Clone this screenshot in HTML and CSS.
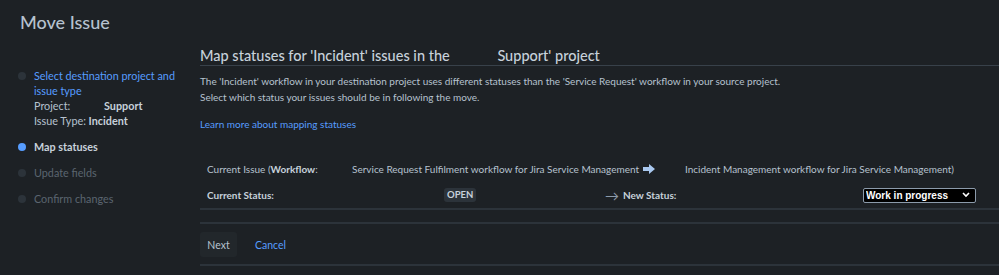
FILE: index.html
```html
<!DOCTYPE html>
<html lang="en">
<head>
  <meta charset="UTF-8" />
  <title>Move Issue</title>
  <link rel="stylesheet" href="styles.css">
</head>
<body>
  <header class="page-header">
    <h1>Move Issue</h1>
  </header>
  <div class="layout">
    <ul class="steps">
      <li class="step done">
        <span class="dot"></span>
        <div class="step-body">
          <a href="#" class="step-link">Select destination project and issue type</a>
          <div class="meta"><span class="meta-label">Project:</span><b>Support</b></div>
          <div class="meta">Issue Type: <b>Incident</b></div>
        </div>
      </li>
      <li class="step current"><span class="dot"></span><div class="step-body">Map statuses</div></li>
      <li class="step todo"><span class="dot"></span><div class="step-body">Update fields</div></li>
      <li class="step todo"><span class="dot"></span><div class="step-body">Confirm changes</div></li>
    </ul>

    <main class="content">
      <h2>Map statuses for 'Incident' issues in the <span class="avatar-gap"></span>Support' project</h2>
      <p class="desc">The 'Incident' workflow in your destination project uses different statuses than the 'Service Request' workflow in your source project.<br>
        Select which status your issues should be in following the move.</p>
      <div class="learn"><a href="#">Learn more about mapping statuses</a></div>

      <div class="mapping">
        <div class="row row-workflow">
          <div class="c1">Current Issue (<b>Workflow</b>:</div>
          <div class="c2">Service Request Fulfilment workflow for Jira Service Management<svg class="fat-arrow" width="12" height="10" viewBox="0 0 12 10"><path d="M0 3h6V0l6 5-6 5V7H0z" fill="#a9c8ef"/></svg></div>
          <div class="c3">Incident Management workflow for Jira Service Management)</div>
        </div>
        <div class="row row-status">
          <div class="s1"><b>Current Status:</b></div>
          <div class="s2"><span class="lozenge">OPEN</span></div>
          <div class="s3">&rarr;</div>
          <div class="s4"><b>New Status:</b></div>
          <div class="s5">
            <select class="status-select">
              <option>Work in progress</option>
            </select>
          </div>
        </div>
      </div>

      <div class="actions">
        <button class="btn">Next</button>
        <a href="#" class="cancel">Cancel</a>
      </div>
    </main>
  </div>
</body>
</html>
```

FILE: styles.css
```css
* { box-sizing: border-box; }
body {
  margin: 0;
  background: #1d2125;
  color: #b6c2cf;
  font-family: Lato, "Noto Sans", sans-serif;
  font-size: 10px;
}
a { color: #579dff; text-decoration: none; }
b { font-weight: 700; color: #c7d1db; }

.page-header {
  padding: 10px 20px 0;
  height: 40px;
}
.page-header h1 {
  margin: 0;
  font-size: 18px;
  line-height: 24px;
  font-weight: 500;
  color: #b6c2cf;
}

.layout {
  display: flex;
}
.steps {
  list-style: none;
  margin: 0;
  padding: 28px 0 0 18px;
  width: 200px;
  font-size: 10.8px;
}
.step {
  display: flex;
  line-height: 15px;
  margin-bottom: 11px;
}
.step-body { max-width: 145px; }
.dot {
  width: 8px;
  height: 8px;
  border-radius: 50%;
  background: #2c333a;
  margin: 4px 8px 0 0;
  flex: none;
}
.step.current { font-weight: 700; color: #c7d1db; }
.step.current .dot { background: #579dff; }
.step.todo { color: #5b6570; }
.step.done { margin-bottom: 11px; }
.step-link { display: block; }
.meta-label { display: inline-block; width: 70px; }

.content {
  flex: 1;
  padding-top: 7px;
}
.content h2 {
  margin: 0;
  font-size: 14.5px;
  font-weight: 500;
  line-height: 18px;
  color: #c7d1db;
  border-bottom: 1px solid #38414a;
}
.avatar-gap { display: inline-block; width: 44px; }
.desc {
  margin: 7px 0 0;
  line-height: 16px;
}
.learn {
  margin-top: 11px;
  line-height: 16px;
}

.mapping {
  margin-top: 24px;
  border-bottom: 2px solid #2c333a;
}
.row {
  display: flex;
  align-items: center;
  height: 26px;
  padding-left: 7px;
}
.c1 { width: 145px; }
.c2 { width: 333px; white-space: nowrap; }
.fat-arrow { margin-left: 4px; vertical-align: -1px; }
.s1 { width: 237px; }
.s2 { width: 161px; }
.s3 { width: 18px; font-size: 14px; color: #8c9bab; }
.s4 { width: 240px; }
.lozenge {
  display: inline-block;
  background: #2c333a;
  color: #c7d1db;
  font-weight: 700;
  font-size: 9.5px;
  padding: 1px 3px;
  border-radius: 3px;
  line-height: 12px;
}
.status-select {
  appearance: none;
  width: 113px;
  height: 15px;
  background: #000 url("data:image/svg+xml,%3Csvg xmlns='http://www.w3.org/2000/svg' width='8' height='6'%3E%3Cpath d='M1 1l3 3 3-3' stroke='%23fff' stroke-width='1.6' fill='none'/%3E%3C/svg%3E") no-repeat right 5px center;
  color: #fff;
  border: 1px solid #8c9bab;
  font-family: Arial, "Liberation Sans", sans-serif;
  font-size: 10px;
  font-weight: 700;
  padding: 0 2px;
  border-radius: 2px;
}

.actions {
  margin-top: 12px;
  border-top: 2px solid #2c333a;
  border-bottom: 2px solid #2c333a;
  padding: 8px 0 7px;
  display: flex;
  align-items: center;
}
.btn {
  background: #22272b;
  color: #b6c2cf;
  border: none;
  border-radius: 3px;
  font-family: inherit;
  font-size: 10.5px;
  width: 37px;
  height: 25px;
  padding: 0;
}
.cancel { margin-left: 18px; font-size: 10.5px; }
```
